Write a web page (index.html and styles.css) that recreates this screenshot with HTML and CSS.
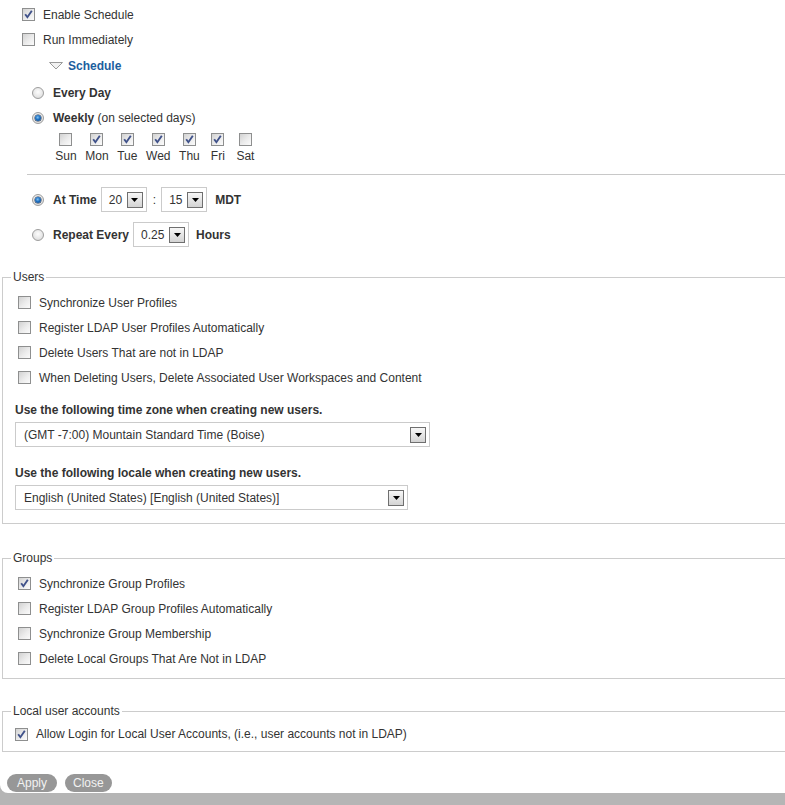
FILE: index.html
```html
<!DOCTYPE html>
<html>
<head>
<meta charset="utf-8">
<title>LDAP Schedule</title>
<link rel="stylesheet" href="styles.css">
</head>
<body>
<div class="panel">
  <div class="sched">
    <div class="row r-top"><span class="cb"><svg width="11" height="11" viewBox="0 0 11 11"><path d="M2.2 5.2 L4.4 8.2 L8.8 1.8" fill="none" stroke="#40528a" stroke-width="1.9"/></svg></span>Enable Schedule</div>
    <div class="row"><span class="cb"></span>Run Immediately</div>
    <div class="row head"><svg class="tri" width="14" height="8" viewBox="0 0 14 8"><polygon points="0.5,0.5 13.5,0.5 7,7" fill="#f2f2f2" stroke="#9a9a9a" stroke-width="1"/></svg>Schedule</div>
    <div class="row rrow r-every"><span class="rad"></span><b>Every Day</b></div>
    <div class="row rrow r-weekly"><span class="rad on"></span><span><b>Weekly</b> (on selected days)</span></div>
    <div class="days">
      <div class="day"><span class="cb"></span><span class="dl">Sun</span></div>
      <div class="day"><span class="cb"><svg width="11" height="11" viewBox="0 0 11 11"><path d="M2.2 5.2 L4.4 8.2 L8.8 1.8" fill="none" stroke="#40528a" stroke-width="1.9"/></svg></span><span class="dl">Mon</span></div>
      <div class="day"><span class="cb"><svg width="11" height="11" viewBox="0 0 11 11"><path d="M2.2 5.2 L4.4 8.2 L8.8 1.8" fill="none" stroke="#40528a" stroke-width="1.9"/></svg></span><span class="dl">Tue</span></div>
      <div class="day"><span class="cb"><svg width="11" height="11" viewBox="0 0 11 11"><path d="M2.2 5.2 L4.4 8.2 L8.8 1.8" fill="none" stroke="#40528a" stroke-width="1.9"/></svg></span><span class="dl">Wed</span></div>
      <div class="day"><span class="cb"><svg width="11" height="11" viewBox="0 0 11 11"><path d="M2.2 5.2 L4.4 8.2 L8.8 1.8" fill="none" stroke="#40528a" stroke-width="1.9"/></svg></span><span class="dl">Thu</span></div>
      <div class="day"><span class="cb"><svg width="11" height="11" viewBox="0 0 11 11"><path d="M2.2 5.2 L4.4 8.2 L8.8 1.8" fill="none" stroke="#40528a" stroke-width="1.9"/></svg></span><span class="dl">Fri</span></div>
      <div class="day"><span class="cb"></span><span class="dl">Sat</span></div>
    </div>
    <div class="sep"></div>
    <div class="row rrow r-time"><span class="rad on"></span><b class="lbl">At Time</b>
      <span class="sel s-small"><span>20</span><span class="dd"><svg width="7" height="4" viewBox="0 0 7 4"><polygon points="0,0 7,0 3.5,4" fill="#000"/></svg></span></span>
      <span class="colon">:</span>
      <span class="sel s-small"><span>15</span><span class="dd"><svg width="7" height="4" viewBox="0 0 7 4"><polygon points="0,0 7,0 3.5,4" fill="#000"/></svg></span></span>
      <b class="unit">MDT</b>
    </div>
    <div class="row rrow r-repeat"><span class="rad"></span><b class="lbl">Repeat Every</b>
      <span class="sel s-rep"><span>0.25</span><span class="dd"><svg width="7" height="4" viewBox="0 0 7 4"><polygon points="0,0 7,0 3.5,4" fill="#000"/></svg></span></span>
      <b class="unit u-hours">Hours</b>
    </div>
  </div>

  <fieldset class="fs fs-users">
    <legend>Users</legend>
    <div class="items">
      <div class="row irow"><span class="cb"></span>Synchronize User Profiles</div>
      <div class="row irow"><span class="cb"></span>Register LDAP User Profiles Automatically</div>
      <div class="row irow"><span class="cb"></span>Delete Users That are not in LDAP</div>
      <div class="row irow"><span class="cb"></span>When Deleting Users, Delete Associated User Workspaces and Content</div>
    </div>
    <div class="flabel">Use the following time zone when creating new users.</div>
    <div class="sel s-tz"><span>(GMT -7:00) Mountain Standard Time (Boise)</span><span class="dd"><svg width="7" height="4" viewBox="0 0 7 4"><polygon points="0,0 7,0 3.5,4" fill="#000"/></svg></span></div>
    <div class="flabel fl2">Use the following locale when creating new users.</div>
    <div class="sel s-loc"><span>English (United States) [English (United States)]</span><span class="dd"><svg width="7" height="4" viewBox="0 0 7 4"><polygon points="0,0 7,0 3.5,4" fill="#000"/></svg></span></div>
  </fieldset>

  <fieldset class="fs fs-groups">
    <legend>Groups</legend>
    <div class="items">
      <div class="row irow"><span class="cb"><svg width="11" height="11" viewBox="0 0 11 11"><path d="M2.2 5.2 L4.4 8.2 L8.8 1.8" fill="none" stroke="#40528a" stroke-width="1.9"/></svg></span>Synchronize Group Profiles</div>
      <div class="row irow"><span class="cb"></span>Register LDAP Group Profiles Automatically</div>
      <div class="row irow"><span class="cb"></span>Synchronize Group Membership</div>
      <div class="row irow"><span class="cb"></span>Delete Local Groups That Are Not in LDAP</div>
    </div>
  </fieldset>

  <fieldset class="fs fs-local">
    <legend>Local user accounts</legend>
    <div class="row lrow"><span class="cb"><svg width="11" height="11" viewBox="0 0 11 11"><path d="M2.2 5.2 L4.4 8.2 L8.8 1.8" fill="none" stroke="#40528a" stroke-width="1.9"/></svg></span>Allow Login for Local User Accounts, (i.e., user accounts not in LDAP)</div>
  </fieldset>

  <div class="btns">
    <span class="btn">Apply</span>
    <span class="btn btn-close">Close</span>
  </div>
</div>
</body>
</html>
```

FILE: styles.css
```css
* { box-sizing: border-box; }
html, body { margin: 0; height: 100%; }
body {
  background: #b5b5b5;
  font-family: "Liberation Sans", Arial, sans-serif;
  font-size: 12px;
  color: #333;
  overflow: hidden;
}
.panel {
  background: #fff;
  height: 793px;
  border-bottom-left-radius: 8px;
  padding-top: 2px;
  overflow: hidden;
}
b { font-weight: bold; }

.sched { padding-left: 22px; }
.row { display: flex; align-items: center; height: 25px; white-space: nowrap; }

.cb {
  flex: none;
  width: 13px;
  height: 13px;
  border: 1px solid #8e8f8f;
  background: linear-gradient(135deg, #d2d2d2 0%, #ececec 55%, #fbfbfb 100%);
  display: inline-block;
}
.cb svg { display: block; }
.row .cb { margin-right: 8px; }

.head { height: 27px; padding-left: 27px; padding-top: 1px; color: #1d5e9e; font-weight: bold; }
.head .tri { margin-right: 5px; }

.rad {
  flex: none;
  width: 12px;
  height: 12px;
  border-radius: 50%;
  border: 1px solid #9d9d9d;
  background: radial-gradient(circle at 50% 40%, #fdfdfd 0%, #e6e6e6 60%, #cfcfcf 100%);
  margin-right: 9px;
  position: relative;
}
.rad.on::after {
  content: "";
  position: absolute;
  left: 2px;
  top: 2px;
  width: 6px;
  height: 6px;
  border-radius: 50%;
  background: radial-gradient(circle at 45% 40%, #7fc3f4 0%, #1e6fc0 45%, #0b3f7a 100%);
  box-shadow: 0 0 0 0.5px #22314a;
}
.rrow { padding-left: 10px; }
.r-every { height: 27px; padding-top: 1px; }
.r-weekly { height: 23px; }

.days { display: flex; margin-left: 29px; padding-top: 4px; }
.day {
  display: flex;
  flex-direction: column;
  align-items: center;
  min-width: 19px;
  padding: 0 4.3px;
  box-sizing: content-box;
}
.day .dl { margin-top: 3px; line-height: 14px; }

.sep { height: 1px; background: #c8c8c8; margin: 11px 0 0 5px; }

.r-time { margin-top: 12px; }
.r-repeat { margin-top: 10px; }
.lbl { margin-right: 4px; }
.colon { margin: 0 5px 0 6px; }
.unit { margin-left: 8px; }
.u-hours { margin-left: 7px; }

.sel {
  display: inline-flex;
  align-items: center;
  height: 25px;
  border: 1px solid #cbcbcb;
  background: #fff;
  padding: 0 3px 0 7px;
  flex: none;
}
.sel .dd { margin-left: auto; }
.s-small { width: 46px; }
.s-rep { width: 56px; }
.dd {
  width: 16px;
  height: 16px;
  border: 1px solid #6f6f6f;
  background: linear-gradient(#f7f7f7, #d3d3d3);
  display: flex;
  align-items: center;
  justify-content: center;
}
.dd svg { display: block; }

.fs {
  border: 1px solid #cccccc;
  border-right: 0;
  margin: 0 0 0 2px;
  padding: 0 0 0 12px;
  min-width: 0;
}
.fs legend {
  padding: 0 2px;
  margin-left: -4px;
  line-height: 14px;
  font-size: 12px;
}
.fs-users { margin-top: 23px; padding-bottom: 13px; }
.fs-groups { margin-top: 27px; padding-bottom: 7px; }
.fs-local { margin-top: 25px; padding-bottom: 5px; }

.items { margin-top: 6px; }
.fs-groups .items { margin-top: 6px; }
.irow { padding-left: 3px; }

.flabel { font-weight: bold; line-height: 14px; margin-top: 13px; }
.fl2 { margin-top: 19px; }
.s-tz { display: flex; width: 415px; margin-top: 5px; padding-left: 8px; }
.s-loc { display: flex; width: 393px; margin-top: 5px; padding-left: 8px; }

.lrow { height: 24px; margin-top: 4px; }

.btns { display: flex; gap: 8px; margin-top: 22px; padding-left: 7px; }
.btn {
  height: 18px;
  line-height: 18px;
  border-radius: 9px;
  background: #979797;
  color: #f2f2f2;
  padding: 0 10px;
  font-size: 12px;
}
.btn-close { padding: 0 8px; }
```
